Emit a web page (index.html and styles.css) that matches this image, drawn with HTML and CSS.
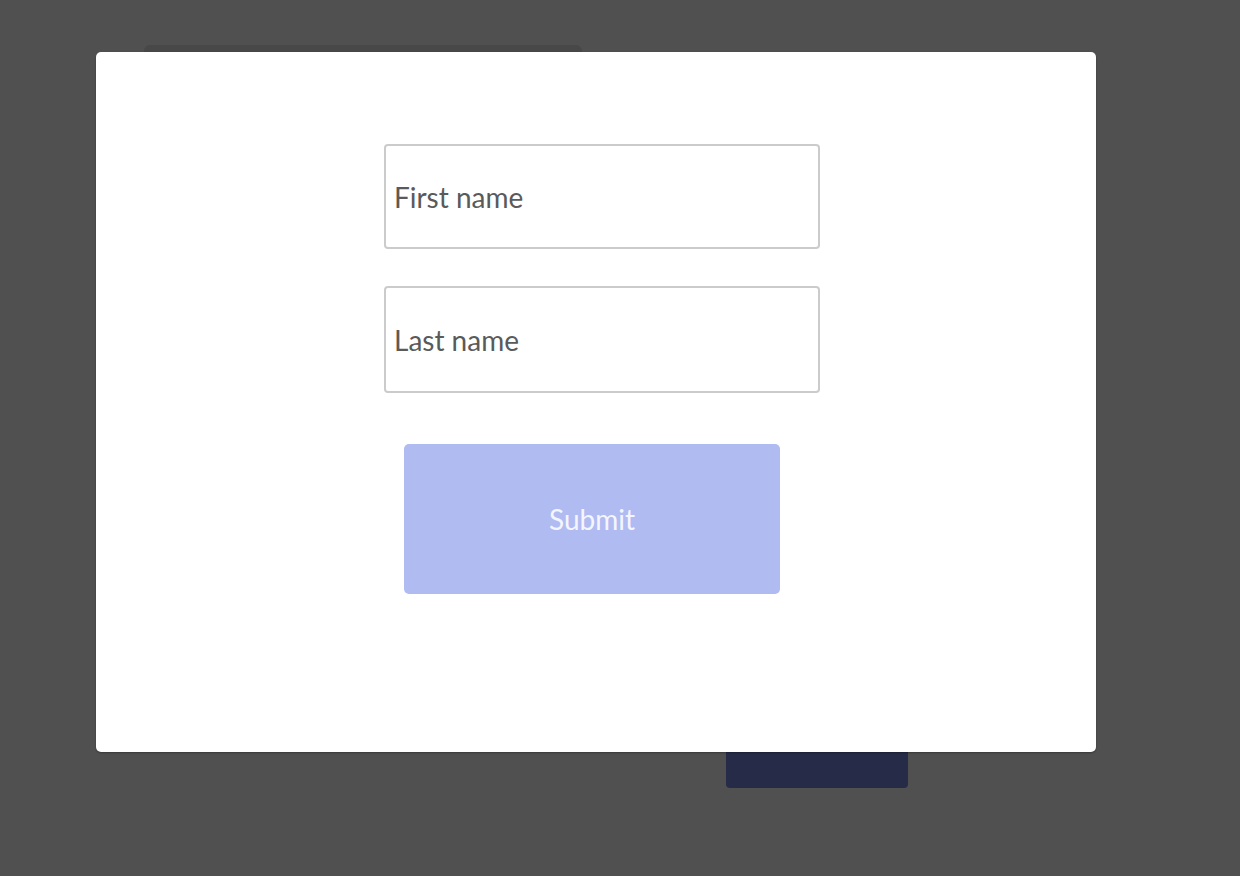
FILE: index.html
```html
<!DOCTYPE html>
<html lang="en">
<head>
<meta charset="utf-8">
<title>Form</title>
<link rel="stylesheet" href="styles.css">
</head>
<body>
<div class="page">
  <div class="bg-card"></div>
  <div class="bg-button"></div>
</div>
<div class="modal">
  <form class="form">
    <input class="field" type="text" placeholder="First name">
    <input class="field field-last" type="text" placeholder="Last name">
    <button class="submit" type="button">Submit</button>
  </form>
</div>
</body>
</html>
```

FILE: styles.css
```css
html, body {
  margin: 0;
  padding: 0;
  height: 100%;
}
body {
  background: #505050;
  font-family: Lato, "Open Sans", sans-serif;
  overflow: hidden;
}
.page {
  position: relative;
  width: 1240px;
  height: 876px;
}
.bg-card {
  position: absolute;
  left: 144px;
  top: 45px;
  width: 438px;
  height: 200px;
  background: #484848;
  border-radius: 6px;
}
.bg-button {
  position: absolute;
  left: 726px;
  top: 740px;
  width: 182px;
  height: 48px;
  background: #262c48;
  border-radius: 4px;
}
.modal {
  position: absolute;
  left: 96px;
  top: 52px;
  width: 1000px;
  height: 700px;
  background: #ffffff;
  border-radius: 5px;
  box-shadow: 0 1px 2px rgba(0, 0, 0, 0.3);
  box-sizing: border-box;
  padding: 92px 0 0 288px;
}
.form {
  display: flex;
  flex-direction: column;
  align-items: flex-start;
}
.field {
  box-sizing: border-box;
  width: 436px;
  height: 105px;
  border: 2px solid #cbcbcb;
  border-radius: 4px;
  padding: 0 8px;
  font-family: Lato, "Open Sans", sans-serif;
  font-size: 28px;
  color: #555555;
  outline: none;
  background: #fff;
}
.field::placeholder {
  color: #5a5a5a;
}
.field-last {
  margin-top: 37px;
  height: 107px;
}
.submit {
  margin-top: 51px;
  margin-left: 20px;
  width: 376px;
  height: 150px;
  border: none;
  border-radius: 5px;
  background: #b0bbf1;
  color: #f4f6ff;
  font-family: Lato, "Open Sans", sans-serif;
  font-size: 28px;
}
```
